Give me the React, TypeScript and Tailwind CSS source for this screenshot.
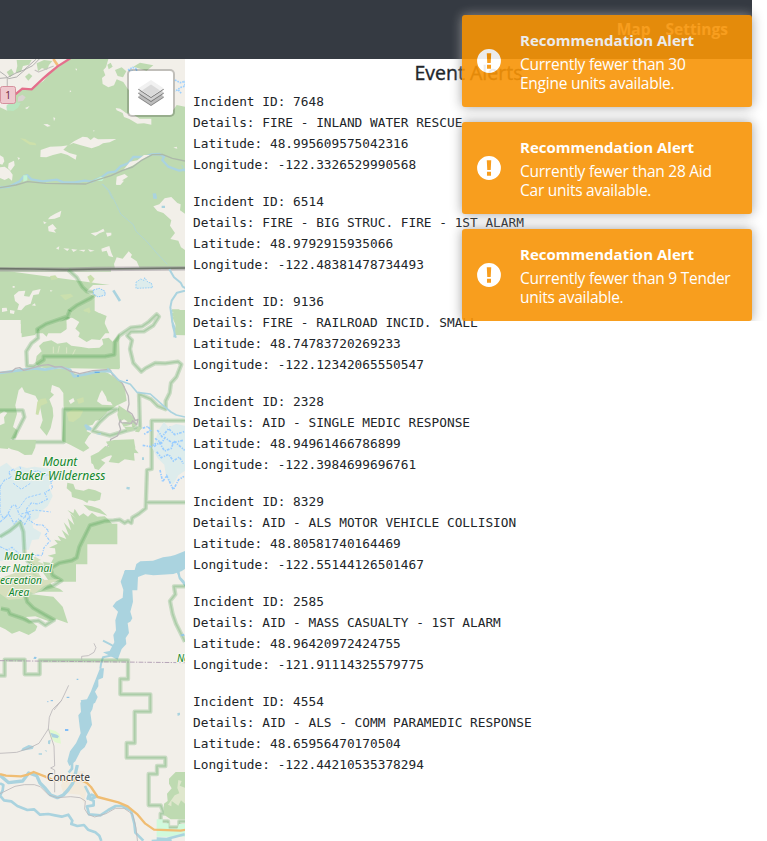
import React from "react";

const incidents = [
  ["7648", "FIRE - INLAND WATER RESCUE", "48.995609575042316", "-122.3326529990568"],
  ["6514", "FIRE - BIG STRUC. FIRE - 1ST ALARM", "48.9792915935066", "-122.48381478734493"],
  ["9136", "FIRE - RAILROAD INCID. SMALL", "48.74783720269233", "-122.12342065550547"],
  ["2328", "AID - SINGLE MEDIC RESPONSE", "48.94961466786899", "-122.3984699696761"],
  ["8329", "AID - ALS MOTOR VEHICLE COLLISION", "48.80581740164469", "-122.55144126501467"],
  ["2585", "AID - MASS CASUALTY - 1ST ALARM", "48.96420972424755", "-121.91114325579775"],
  ["4554", "AID - ALS - COMM PARAMEDIC RESPONSE", "48.65956470170504", "-122.44210535378294"],
];

const alerts = [
  ["Currently fewer than 30", "Engine units available."],
  ["Currently fewer than 28 Aid", "Car units available."],
  ["Currently fewer than 9 Tender", "units available."],
];

const LAND = "#f2efe9";
const WOOD = "#bedab1";
const WATER = "#aad3df";
const ICE = "#ddecec";

function Boundary({ d }: { d: string }) {
  return (
    <g fill="none" stroke="#4fa152" strokeLinejoin="round">
      <path d={d} strokeWidth="13" opacity=".25" />
      <path d={d} strokeWidth="5" opacity=".24" />
    </g>
  );
}

function Water({ d, w = 5 }: { d: string; w?: number }) {
  return <path d={d} fill="none" stroke={WATER} strokeWidth={w} strokeLinejoin="round" />;
}

function Road({ d, w = 2.5, c = "#bbb7b9" }: { d: string; w?: number; c?: string }) {
  return <path d={d} fill="none" stroke={c} strokeWidth={w} strokeLinejoin="round" />;
}

function MapArt() {
  return (
    <svg viewBox="0 59 185 782" className="block h-[782px] w-[185px]">
      <rect y="59" width="185" height="782" fill={LAND} />

      {/* northern forest */}
      <g transform="translate(0 50) scale(.33333)">
        <path d="M0 27H555V665H0Z" fill={WOOD} />
        <path d="M0 27H205L176 50 150 70 130 93 95 117 65 118 48 132 38 152 20 170 22 182 0 172Z" fill={LAND} />
        <path d="M50 30h45l-8 14-18 4-6 18-16 2 5-20zM110 40l22-10 25 3-10 12-6 15-15-6-12 10zM20 66l14-10 8 14-12 12zM75 80l12-10 10 8-12 14z" fill={WOOD} />
        <path d="M20 165l22-10 20 4-8 14-14 10-20-2z" fill="#b9e6c0" />
        <path d="M55 140l12-6 10 8-8 10-16 3z" fill="#d9d3d0" />
        <path d="M325 27H555V170L530 165 520 180 500 160 450 160 420 140 384 118 370 96 350 88 342 106 325 112 308 102 306 84 316 76 310 60 318 52Z" fill={LAND} />
        <path d="M345 60l20-8 14 12-10 18-16-4zM400 50l20-12 40 8-20 16zM322 44l10-6 6 12-12 8z" fill={WOOD} />
        <path d="M384 60l14-8 14 6-8 8zM525 90l16 8 14-4v14l-12 4-18 12M535 120l10 12" fill="none" stroke="#9cd0ff" strokeWidth="5" strokeDasharray="5 3" />
        <path d="M347 174l14 2 18 14 22 4 18 12h35v18l-22-4-20 1-24-14-16-6-4-12-18-8zM122 300l28-10 34-1 22-3 16-12 26-14 14 2 10 8 10-8 12 6 55-1-20 10-20 3-12 7-22 8-35-10-20-6-18 8-12 12 18 10 22 6-3 14-24-14-20-6-24 6-20 7-18-1z" fill={LAND} />
        <path d="M130 223l12-1 10 6-10 2zM210 120l4 5-5 2zM75 174l14-6-8 10zM225 56h6v6zM280 240l4 2-3 3zM520 293l10-3 2 6zM160 202l6 2-4 10z" fill={LAND} />
        <path d="M60 265l16 2 12 8 18 4 3 7-20-2z" fill="#cde0aa" />
        <path d="M0 316l10 6 3 12-6 10-7-2zM26 340l16-8 2 14-12 16-8-8zM0 352l14-2 14 10 10 14-2 18-10-8-12 6-14-6zM350 380l24-8 10 8-16 10-8 14-12-2zM52 322l8 2-4 6z" fill={LAND} />
        <Road d="M0 85l22-2 26-14 24-9 36-32M0 65l14 10 12 11 24-5 28-24 20-10 20-20" c="#a4a4a4" />
        <Road d="M22 83v32M104 60l12 6 45-18" c="#c6c3c0" w={4} />
        <path d="M160 27l14 20" stroke="#f2bd7b" strokeWidth="8" />
        <path d="M45 134l22-18 28 2 34-32 16-14 28-23 38-24" fill="none" stroke="#e46f8c" strokeWidth="7" />
        <path d="M0 413l28-3 30-15 14-17 10-2 12 12 34 6 42-5 20 8h34l30-5 22 3 28-13 20-14 22-3 16-16 24-10 14-18h32l22-8 24-1 14 8-5 10 18 20 32 12 20-3 22 6" fill="none" stroke={WATER} strokeWidth="7" />
        <path d="M70 376h12v15l-12 4zM280 392l22-12 12 3-8 10z" fill="#c2f3d2" />
        <path d="M370 360l30-14 24-15 28-16-20 0-20 16-22 4z" fill={LAND} />
        <Road d="M0 413l48-8 35-10 55 5 120 2 20-8 55-17 35-16 30-10 25-19 34-18 30-1 30 12 38 8" w={4} c="#acb9aa" />
        <Water d="M305 402l20 20 12 25M545 345l14 28" w={2} />
        <path d="M458 430l10 2 3 14-10-2zM490 462l8 4-4 4z" fill={WATER} />
      </g>

      <g transform="translate(0 180) scale(.33333)">
        <Water d="M308 12l20 20 24 48 10 22 38 32 8 20 32 30 30 35 32 34" w={2} />
        <path d="M555 210l-12-8-8-20-24-5 14-18-15-22 4-16-24-22-18-6-12-14 18-6 16-18 20-4 18 18 10 4-2 18 15 10zM345 266l-3-14 8-20 18 4 18-22 10 10-4 8 18 12 10 22zM355 0l17 2-10 12-14 1z" fill={LAND} />
        <path d="M150 110l14-8 20-10-4 18-16 6-20 2zM144 140l14-8 12 14-8 4 6 8-22-4zM130 124l10 4-8 4zM272 160l20-4 18-10 4 8-16 6-12 8zM318 158h16v8l-12 4zM168 205l10-6-2 10zM190 205l18 1-6 7zM214 207l18 2-12 7zM236 210l20-1-4 6zM264 208l20 4-14 3zM304 206l12-4 12-4 6 20 6 14-14-4-6-16-14 3z" fill={LAND} />
        <path d="M458 42l10-2 2 16h-10zM485 77h10v7h-10z" fill={WATER} />
        {/* forest below the frontier */}
        <path d="M333 268H555V500H372L316 440 322 410 290 392 288 344 270 336 264 320 285 314 300 322 333 326Z" fill={LAND} />
        <path d="M0 270v150h62v40h120l20-14-2-24 14-10 22 4 14 18-12 26h90l-14-30-4-24-26-14V350l-25-15 20-20h50" fill={WOOD} />
        <path d="M42 346l14-12 20-2-4 16 16 2 10-18 24-5-6 16-16 2-8 26-16 6-12 14-12-2 5-16-12-10zM6 384l14-1 2 10-16 3zM30 390l14 2-2 10-12-2zM0 432h62v40H0zM80 405l10-2-4 8zM150 330l8 2-6 3zM200 420l18-6 20 8 10 12-4 16h-44zM95 376l10-6 2 8zM38 318h6v5h-6z" fill={LAND} />
        <path d="M180 345l32-4 8 8-24 12zM250 390l18-8 4 14-14 10zM150 288l16-2 8 10-20 5zM262 290l10-6 12 12-12 16z" fill="#cadfad" />
        <path d="M0 268H90l110 1 90-2 265-2" fill="none" stroke="#948d95" strokeWidth="13" opacity=".55" />
        <path d="M0 266l100 1 95 2 105-2 255-3" fill="none" stroke="#6d746a" strokeWidth="5" />
        <Boundary d="M205 270l25 22 17 29 14 13 30 4-18 16-42 22-22 16-5 20-34 9-36 13-24 16" />
        <path d="M280 330l18-5 16 8 2 12-22 6-14-10z" fill={ICE} stroke="#8ac5fb" strokeWidth="3" strokeDasharray="5 3" />
        <path d="M408 307l14-10 10 4 2-8 10 14 10 2 4 14-50 2z" fill={ICE} stroke="#9ad0f5" strokeWidth="3" strokeDasharray="5 3" />
        <path d="M340 331l20 32" stroke={WATER} strokeWidth="8" />
        <Water d="M508 268l14 24 20 16 6 12 8 4M555 332l-24 6-16 24-4 20 6 44 8 20-2 26" w={6} />
        <path d="M516 388h22l4 14 13 4v60l-30-1 2-40-12-14z" fill={WOOD} />
        <path d="M516 397h22M518 410h30M523 423h30" stroke="#dfe8cf" strokeWidth="3" />
      </g>

      <g transform="translate(0 310) scale(.33333)">
        <path d="M65 0H200L222 10 240 2 262 6 275 20 300 10 320 18 310 50 316 70 300 90 275 88 260 96 235 80 240 68 226 56 238 36 218 24 204 20 180 35 176 55 165 48 150 58 140 80 115 56 105 75 65 82Z" fill={WOOD} />
        <path d="M130 96l24-5 18 10 28-4 14 10 30 4 22 4 32-2 12-10-4-16 20-4 12 12 18-20 4 100H140l-22-3-12-12 4-22 15-14-8-16z" fill={WOOD} />
        <path d="M160 110v20M178 108l-4 20M200 112v18M226 118l-8 16" stroke="#dbe6c6" strokeWidth="3" />
        <path d="M358 70v108l-228-6v-30h190l24-20V90z" fill={WOOD} />
        <path d="M0 187l70-10 50-7 10 10 60-5 45 20 65-15 25 10 35 23 14 16 6 44-10 15-180 2-26 26-8 37 32 26-48-2-20-24 8-22-10-52-12-22-32-10-8-16-10 10-10 45 5 25-12 40 14 10-5 22-16 4-8 30-50-4-18-20-10 20-20 14-16-3z" fill={WOOD} />
        <path d="M156 225l22 8 12 16 2 133h-54l14-28 8-36-2-24-10-26 14-14-10-8z" fill={LAND} />
        <path d="M193 282h78l15 4 70-1-14 20-28 25-12 10-4-10-12 2-8 12-14 4-4 16 14 6-8 8-12 20 14 16-18 11-38-20-26-12z" fill={WOOD} />
        <path d="M0 312l12-8 10 4-10 14 2 18-14 6zM300 250l6-10 12 20 4 14 10 2 6 10-32-2-15-10zM206 272l14-8 4 10-12 8z" fill={LAND} />
        <path d="M112 275l10-8 15-2 6 14-20 8-8 28-8-2zM230 268l20-6 2 14-16 6zM200 310l20-14 30 6-10 20-20 14-14-2z" fill="#ccdfac" />
        <path d="M352 286l-28 18-25 25-20 48 52 14 70-12 38-18-3-82-40-14z" fill={LAND} />
        <path d="M356 286l30 20 20 22-4 18-30-18-14 8-6-22zM365 340l20-6 8 10-22 6zM394 340l12-6 5 12-14 8z" fill={WOOD} />
        <Boundary d="M210 0l-8 20-30 10-34 12-26 16 2 26-20 16-15 24 2 44 20 1 30-20v-10h184l28-5 2-38 14-20 34-23 34-4 20-14 23-22 7 7-17 26-28 18-40 1-10 12 14 14-6 26 10 42 24 26 12-10 30-16 30 1 38-5 10 8-15 38-16 18-4 30-12 24v25l-24-10-20-20-36-16 3 100-40 10-50 15-52-14 20-26 25-23 28-16h-160v98H35l38-75-5-20H0" />
        <Water d="M0 189l55-8 50-6 30 4 45-8 30 8 12 20 32-6 50-10 30 1" w={8} />
        <Road d="M0 187l35-2 12-10 12-2 12 8 54-15 20-2 20 7 20-1 24 13 30 8 40-9 50-4 10 18 28 24 18 38 2 24-5 20 14 10 10 20 8-4-4 16-12-12-4 8-30-2-3-8-4 12 5 16-10 20-20 10-2 12-8 10" w={4} />
        <Water d="M322 175l20 20 14 16 35 12 20 24 40 5 38 34 24 20 16 9 26 6" w={5} />
        <path d="M284 187h15M231 198h6M378 211h6" stroke="#59a7ec" strokeWidth="3" />
        <path d="M252 346l6-4 18 12-4 8-12-2zM288 372l16-4-3 6z" fill={WATER} />
        <Water d="M514 0l4 48 10 35" w={5} />
        <path d="M520 0h35v75l-20-3-5-22-10-20z" fill={WOOD} />
        <path d="M372 350h26l6 10-22 3zM405 365l10-16 10 4-8 14zM336 400l20-6 18 6 24-6 8 16-4 22 2 20-30-4-18 12-30-4 10-18-14-14z" fill={WOOD} />
        <path d="M508 348l18 8 4 12-16-8z" fill={WATER} />
      </g>

      <g transform="translate(0 440) scale(.33333)">
        <path d="M14 0h94l-2 22-10 22-22 1-20-12-20-5-20-10zM272 48l24-12 20-18 16 4 12 20-24 8-18 10-12 18-16-8zM318 5l24-5 60-2 4 30 10 12-24-2-20-4-28 14z" fill={WOOD} />
        <path d="M0 80l20-12 20 20 18-10 22 6 24-4 50 8 18 20-26 30 12 30-15 30-24 20-4 16-20 10 5 20 24 14-8 20-20 2-10 30-16-2-10 25-60 10z" fill={ICE} />
        <path d="M0 140l14-20 20-8-8-16 14-8 18 24 16 4 14-16 26-8 22 12 34 4-18 18 6 18-24 14 8 20-28 14-20-3-16 20 10 20-14 24-18-16-14 14-16-30-14 16-12-18zM0 246l20-18 16-30 10-4 12 30 15 12 8-20 10 8-3 16 18 14 22 1 18 18-10 12 14 18-18 20-6 24-18-2-6 14-20-3M0 320l22 10 14-8 20 18" fill="none" stroke="#99ccff" strokeWidth="3.5" strokeDasharray="8 3 3 4" />
        <path d="M60 80l8 30 32-8 22 10M40 130l24 18 30-20M56 205l24-32 45-12M64 222l40-12 48 6" fill="none" stroke="#99ccff" strokeWidth="3" strokeDasharray="7 4" />
        <path d="M202 128l18 4 6 16 25 4 15-6 20 5 18 8-4 20-16 5-18-3-4 8-14-8-32-10-2-14-14-12zM250 194l26 5 24 8 22 20-25-8-30-8zM276 62l24-4 16 10-20 22-12-4z" fill={WOOD} />
        <path d="M202 210l18 10 4-14 14 22 12-8 14 10 12-12 16 12 22-1 12 10 10 12h16v62h-90v60h-34v52H0v30H190l-10-8-22-8-35-50-20 12-5-16 35-8-4-12 24 4 8-16-18-6 24-6-2-16-18-2 26-12-10-12 20 4-10-16 26 10-14-28 22 18-16-40 22 24-10-36 20 20-12-34 18 16z" fill={WOOD} />
        <path d="M105 350l18 10-10 4 18 8-8 10 12 14-20 3 10 14-20-5-12 18-22-2 10-20-14-18z" fill="#d2dfbc" />
        <Boundary d="M0 290l30-18 30-25 10 28 4 75 14 20 20 15 50-4 20-12 38-8 14-8 8-32 32-65 45-13 26-2 18-2 15 10 10-6 10 6 3-16 20-12 20-16 4-115 14-3V-58H555M440 187H555M150 382l8 24 26 16-24 15-78 23-50-20-28 16" />
        <path d="M478-34l14-20 14 16 22-10 27 5V92l-20 14-16 28-20-20-6-40-20-20-16-30z" fill={ICE} />
        <path d="M472-30l14 20 20-24 18 18 31-10M465-5l20 14 10-16 22 16 32-8M462 20l16-12 16 25 20-8 8-22 32 28M470 35l14 18 22-10 14 20 18-12 12 20M480 90l8 35 12-18 20 42 16-30 16-10M428-35l16-6 8 12-20 12M428 16l24 4 16-10" fill="none" stroke="#99ccff" strokeWidth="5" strokeDasharray="8 4 4 3" />
        <path d="M380 140l10 2-2 7-9-2zM426 52h6v8h-6z" fill={WATER} />
        <path d="M555 333l-30 12-14 4-22 3-30 10-38 2-12 8-5 18-32 4 12 12v45h28l2-40 22-8 24 3 60-4 24-8 22-14z" fill={WATER} />
        <Water d="M530 390l9 22 12 12 4 14" />
      </g>

      <g transform="translate(0 570) scale(.33333)">
        <path d="M0 40l80-10 20-20 50 30-28 24-32 8 70 8 28 30 16 50-34-12-24 6-40-15-28 2 34 28-6 14-20 12-28-12-22 8-20-13-16-8z" fill={WOOD} />
        <path d="M70 0l60 30 50-2-48 20-30 24-14-8-22 22-40 3-26-18V25z" fill="#d6dfbd" />
        <Boundary d="M76 76l6 20 18 18 34 20 28 16-26 16-20-14-28 3-20-10-38-13-6-12-21-4" />
        <path d="M375 0h40l-8 45-10 16 2 34-8 30 6 20-6 10-8 4 4 30-10 15 2 18-14 15-12 32-24-12-20-10 20-4 14-26-3-22 8-14-2-30 8-26-16-16 10-14 20-12 2-24-8-24z" fill={WATER} />
        <Water d="M309 212l22 11 14 8M535 0l4 25 16 20M345 254l-36 8-6 20-2 14" w={6} />
        <path d="M300 295h12l-3 28-14 6v20l-10 16 8 16-8 18-12 4-4 20h-14l2-20-16-12 20-3 12-24 6-16z" fill={WATER} />
        <Boundary d="M555 49h-33l4 24-16 20 8 40 10 28 12 24 15 30" />
        <Boundary d="M0 317h14v-48h60v44h45v-42h265v56h-23v46h90v17" />
        <path d="M0 272l360 4 195 2" fill="none" stroke="#a995ad" strokeWidth="2.5" strokeDasharray="14 4 4 4" />
        <Road d="M245 272v-13l20-2 17-10 6-14-6-13M206 346l-15 32-7 14-22 28" />
        <path d="M103 260l7 1-2 6-8-1zM230 326h5v4h-5zM540 195l10-4 5 5-8 3z" fill="#91c7e8" />
        <path d="M152 392h7M142 395h3M200 382h8" stroke="#79bae7" strokeWidth="3" />
      </g>

      <g transform="translate(0 700) scale(.33333)">
        <Boundary d="M451 0v35h-47v94h-24v44h116v25h-25v24h-25v94h36l10 25h-10v23h22v18h34v-18h17" />
        <path d="M555 216h-28l-20 20v15l8 14-14 16 2 22-11 8v33l20 14h43z" fill={WOOD} />
        <path d="M535 240l10 3-6 14 16 6v48l-12-10-8 16-20-14-1 16-10-5 20-28 14-6-6-16z" fill="#dfe7cd" />
        <path d="M470 358h18v12h18v16h26l5-14h18v38h-85z" fill="#d0f9dc" />
        <path d="M147 88l20 5 12 10 4 28-18-4-14-16z" fill="#e0f9cf" />
        <path d="M151 98l20 6 6 5-4 6-16-3zM144 122l8-3-2 14-6-2z" fill={WATER} />
        <path d="M195 90h10" stroke="#48a5ff" strokeWidth="4" />
        <path d="M245 0h38l-6 28-6 10 5 36-12 24-6 12 4 16-8 16-12 10-16 32-18 14-6-14 8-30 18-24 14-30-3-20-4-34 8-10-2-26z" fill={WATER} />
        <Water d="M216 186v20l-10 12" w={8} />
        <path d="M68 144l18-9 16 4-4 8-36 6M116 160h10v4h-10zM134 150l7 2-2 4zM532 39l8-1v7l-7 3z" fill={WATER} />
        <path d="M212 218l40-6 12 38-12 60-12-26-50-5-8-24 14-20z" fill="#f2eadb" />
        <Water d="M0 226l26 22 42-5 18-24 24 8 10 22 14 14 18 22 20 8 18-8 14-15 14-20 8-28 6-27" w={10} />
        <Water d="M0 250l10 5-2 16-8 16 12 14 22 3 18 14 30 12 20-2 18 16 25-2 20 4 20 4 20-6 12 18-3 10 18 6 20-3 12 14 22 8 12 10 6 16M255 258l12 24-4 14 12-12 14 6-20 8 12 4v14l-20 3 6 24 34 3 24-16 22-12h20l26 14 10 38 3 28 24 24" w={8} />
        <Road d="M0 160l50-3 34-11 33-16 28-43 3-35 10-24 28-28M145 86l17 52 2 60-12 6 12 6v67M0 281l45-22 28-5h30l18 6 25 25 26 8 40-3 28 3 16 10-2 24 10 16 20 8 34-10 28-16h26l26 18 10 40 5 45" />
        <Road d="M0 222l18 5 45 2 20-5 18-8 35 14 25 11 38 1 42-2 20 9 12 12 20 30 62 16 28 12 30 25 23 27 26 18 80 3 16-3" w={7} c="#f0bd73" />
        <Water d="M470 416l30 1 54-14M455 423l60-4" w={8} />
      </g>

      <rect x=".5" y="86.5" width="15" height="17" rx="2" fill="#efc9cf" stroke="#d5919d" />
      <text x="8" y="99" textAnchor="middle" fontFamily="Noto Sans, sans-serif" fontSize="10" fill="#742c42">1</text>
      <g fontFamily="Noto Sans, sans-serif" fontStyle="italic" textAnchor="middle" fill="#12862b" stroke="#f5f7ef" strokeWidth="2" paintOrder="stroke">
        <text x="60" y="465.5" fontSize="12">Mount</text>
        <text x="60" y="479.5" fontSize="12">Baker Wilderness</text>
        <g fontSize="10.2">
          <text x="19" y="560">Mount</text>
          <text x="18" y="572">Baker National</text>
          <text x="18" y="584">Recreation</text>
          <text x="19" y="596">Area</text>
        </g>
        <text x="177" y="662" fontSize="10" textAnchor="start">No</text>
      </g>
      <text x="68.5" y="780.5" fontFamily="Noto Sans, sans-serif" fontSize="10.2" textAnchor="middle" fill="#333" stroke="#f7f4ef" strokeWidth="2" paintOrder="stroke">Concrete</text>
    </svg>
  );
}

function LayersIcon() {
  return (
    <svg viewBox="0 0 26 26" className="h-[26px] w-[26px]">
      <path d="M0 17.5 13 9l13 8.5L13 26Z" fill="#858585" />
      <path d="M0 16.5 13 8l13 8.5L13 25Z" fill="#bcbcbc" />
      <path d="M0 13.5 13 5l13 8.5L13 22Z" fill="#777" />
      <path d="M0 12.5 13 4l13 8.5L13 21Z" fill="#d0d0d0" />
      <path d="M0 9.5 13 1l13 8.5L13 18Z" fill="#777" />
      <path d="M0 8.5 13 0l13 8.5L13 17Z" fill="#f1f1f1" />
      <path d="M4 10.5 13 4.5l9 6L13 16.5Z" fill="#dadada" />
    </svg>
  );
}

export default function App() {
  return (
    <div className="relative h-[841px] w-[767px] overflow-hidden bg-white font-['Open_Sans','Noto_Sans',sans-serif] text-[#212529]">
      <div className="w-[752px]">
        <header className="flex h-[59px] items-center justify-end gap-[15px] bg-[#353a42] pr-6 pt-px text-[15.5px] font-bold text-white">
          <span>Map</span>
          <span>Settings</span>
        </header>
        <main className="flex h-[782px]">
          <section className="relative w-[185px] shrink-0 overflow-hidden">
            <MapArt />
            <button className="absolute left-[127px] top-[10px] flex h-12 w-12 items-center justify-center rounded-[5px] border-2 border-black/20 bg-white bg-clip-padding">
              <LayersIcon />
            </button>
          </section>
          <section className="flex-1 px-2">
            <h5 className="h-8 text-center text-[19.5px] font-medium leading-[27px] [-webkit-text-stroke:0.35px]">Event Alerts</h5>
            <div className="flex flex-col gap-4 whitespace-pre font-['DejaVu_Sans_Mono',monospace] text-[12.79px] leading-[21px]">
              {incidents.map(([id, details, lat, lng]) => (
                <div key={id}>
                  <p>Incident ID: {id}</p>
                  <p>Details: {details}</p>
                  <p>Latitude: {lat}</p>
                  <p>Longitude: {lng}</p>
                </div>
              ))}
            </div>
          </section>
        </main>
      </div>

      <aside className="absolute right-[15px] top-[15px] flex w-[290px] flex-col gap-[15px] [clip-path:inset(-15px_-15px_0_-15px)]">
        {alerts.map(([first, second]) => (
          <div key={first} className="flex h-[92px] items-center gap-[18px] rounded-[3px] bg-[#f89406] pl-[15px] text-white opacity-90 shadow-[0_0_12px_#999]">
            <svg viewBox="0 0 25 25" className="mr-px h-6 w-6 shrink-0">
              <path fill="currentColor" fillRule="evenodd" d="M12.5.1a12.4 12.4 0 1 1 0 24.8 12.4 12.4 0 0 1 0-24.8ZM10.2 4.5l.5 10.2h3.6l.5-10.2ZM10.4 16.5v4h4.2v-4Z" />
            </svg>
            <div className="whitespace-nowrap pt-[2px] text-[15.5px] leading-[19px] tracking-[-0.25px]">
              <p className="mb-[5px] text-[15px] font-bold tracking-[0.02px]">Recommendation Alert</p>
              <p>{first}</p>
              <p>{second}</p>
            </div>
          </div>
        ))}
      </aside>
    </div>
  );
}
